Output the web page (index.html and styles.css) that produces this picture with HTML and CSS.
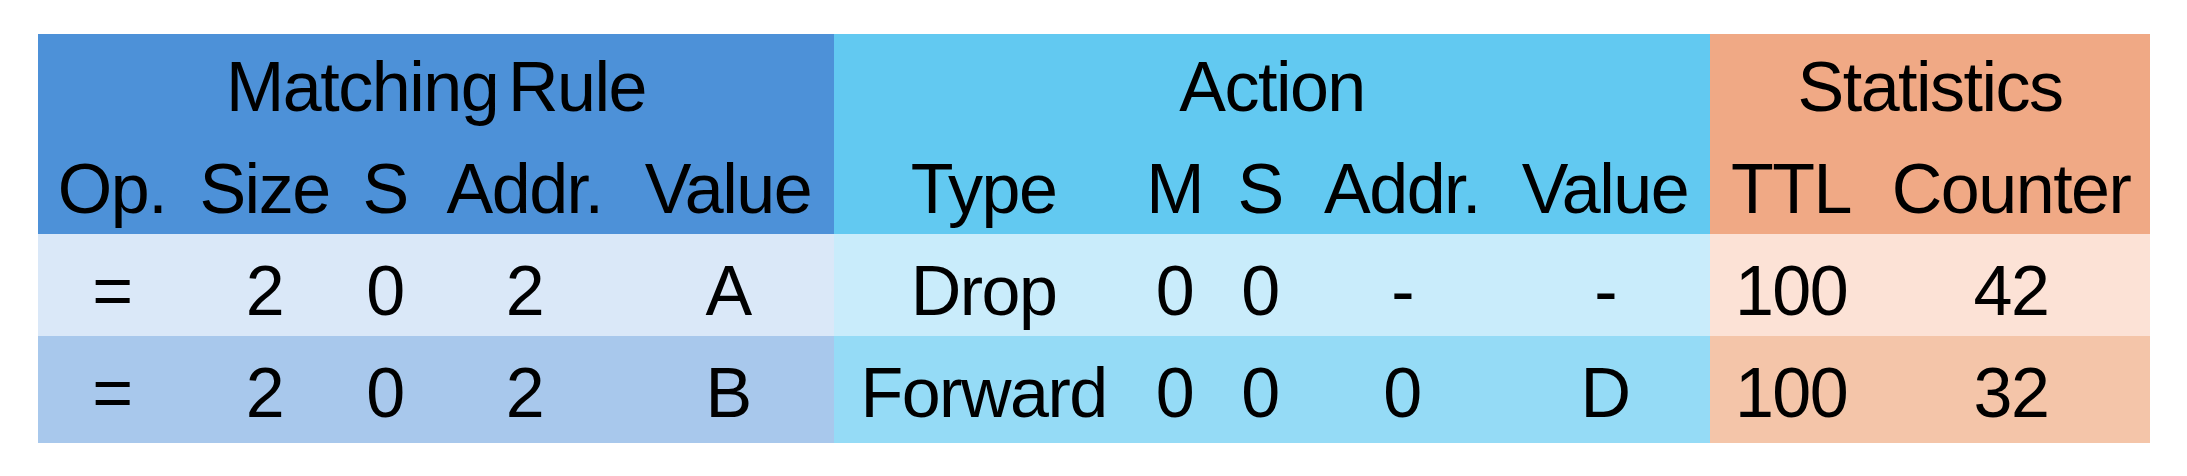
FILE: index.html
```html
<!DOCTYPE html>
<html lang="en">
<head>
<meta charset="utf-8">
<title>Flow table</title>
<link rel="stylesheet" href="styles.css">
</head>
<body>
<table class="flow">
  <colgroup>
    <col class="c-op"><col class="c-size"><col class="c-s"><col class="c-addr"><col class="c-val">
    <col class="c-type"><col class="c-m"><col class="c-as"><col class="c-aaddr"><col class="c-aval">
    <col class="c-ttl"><col class="c-cnt">
  </colgroup>
  <thead>
    <tr class="title-row">
      <th colspan="5" class="mr-head"><span class="title">Matching Rule</span></th>
      <th colspan="5" class="ac-head">Action</th>
      <th colspan="2" class="st-head">Statistics</th>
    </tr>
    <tr class="sub-row">
      <th class="mr-head">Op.</th>
      <th class="mr-head">Size</th>
      <th class="mr-head">S</th>
      <th class="mr-head">Addr.</th>
      <th class="mr-head">Value</th>
      <th class="ac-head">Type</th>
      <th class="ac-head">M</th>
      <th class="ac-head">S</th>
      <th class="ac-head">Addr.</th>
      <th class="ac-head">Value</th>
      <th class="st-head">TTL</th>
      <th class="st-head">Counter</th>
    </tr>
  </thead>
  <tbody>
    <tr class="row-a">
      <td class="mr">=</td>
      <td class="mr">2</td>
      <td class="mr">0</td>
      <td class="mr">2</td>
      <td class="mr">A</td>
      <td class="ac">Drop</td>
      <td class="ac">0</td>
      <td class="ac">0</td>
      <td class="ac">-</td>
      <td class="ac">-</td>
      <td class="st">100</td>
      <td class="st">42</td>
    </tr>
    <tr class="row-b">
      <td class="mr">=</td>
      <td class="mr">2</td>
      <td class="mr">0</td>
      <td class="mr">2</td>
      <td class="mr">B</td>
      <td class="ac">Forward</td>
      <td class="ac">0</td>
      <td class="ac">0</td>
      <td class="ac">0</td>
      <td class="ac">D</td>
      <td class="st">100</td>
      <td class="st">32</td>
    </tr>
  </tbody>
</table>
</body>
</html>
```

FILE: styles.css
```css
html, body {
  margin: 0;
  padding: 0;
  background: #ffffff;
}

body {
  padding: 34px 0 0 38px;
  font-family: "Liberation Sans", Arial, sans-serif;
  color: #000000;
}

.flow {
  border-collapse: collapse;
  border-spacing: 0;
  table-layout: fixed;
  width: 2112px;
  font-size: 70px;
  letter-spacing: -1.5px;
}

.c-op { width: 148px; }
.c-size { width: 157px; }
.c-s { width: 84px; }
.c-addr { width: 195px; }
.c-val { width: 212px; }
.c-type { width: 299px; }
.c-m { width: 83px; }
.c-as { width: 88px; }
.c-aaddr { width: 196px; }
.c-aval { width: 210px; }
.c-ttl { width: 162px; }
.c-cnt { width: 278px; }

.flow th,
.flow td {
  padding: 0;
  text-align: center;
  vertical-align: top;
  font-weight: normal;
  line-height: 90px;
  white-space: nowrap;
  border: 0;
}

.title-row th {
  padding-top: 7.5px;
}

.sub-row th {
  padding-top: 12.5px;
}

.row-a td {
  padding-top: 12px;
}

.row-b td {
  padding-top: 12px;
  padding-bottom: 5px;
}

.title {
  word-spacing: -8px;
}

.mr-head { background: #4d91d8; }
.ac-head { background: #62c9f1; }
.st-head { background: #f0a985; }

.row-a .mr { background: #dae8f8; }
.row-a .ac { background: #c9ecfb; }
.row-a .st { background: #fce2d6; }

.row-b .mr { background: #a8c8ec; }
.row-b .ac { background: #95dbf6; }
.row-b .st { background: #f4c5a9; }
```
